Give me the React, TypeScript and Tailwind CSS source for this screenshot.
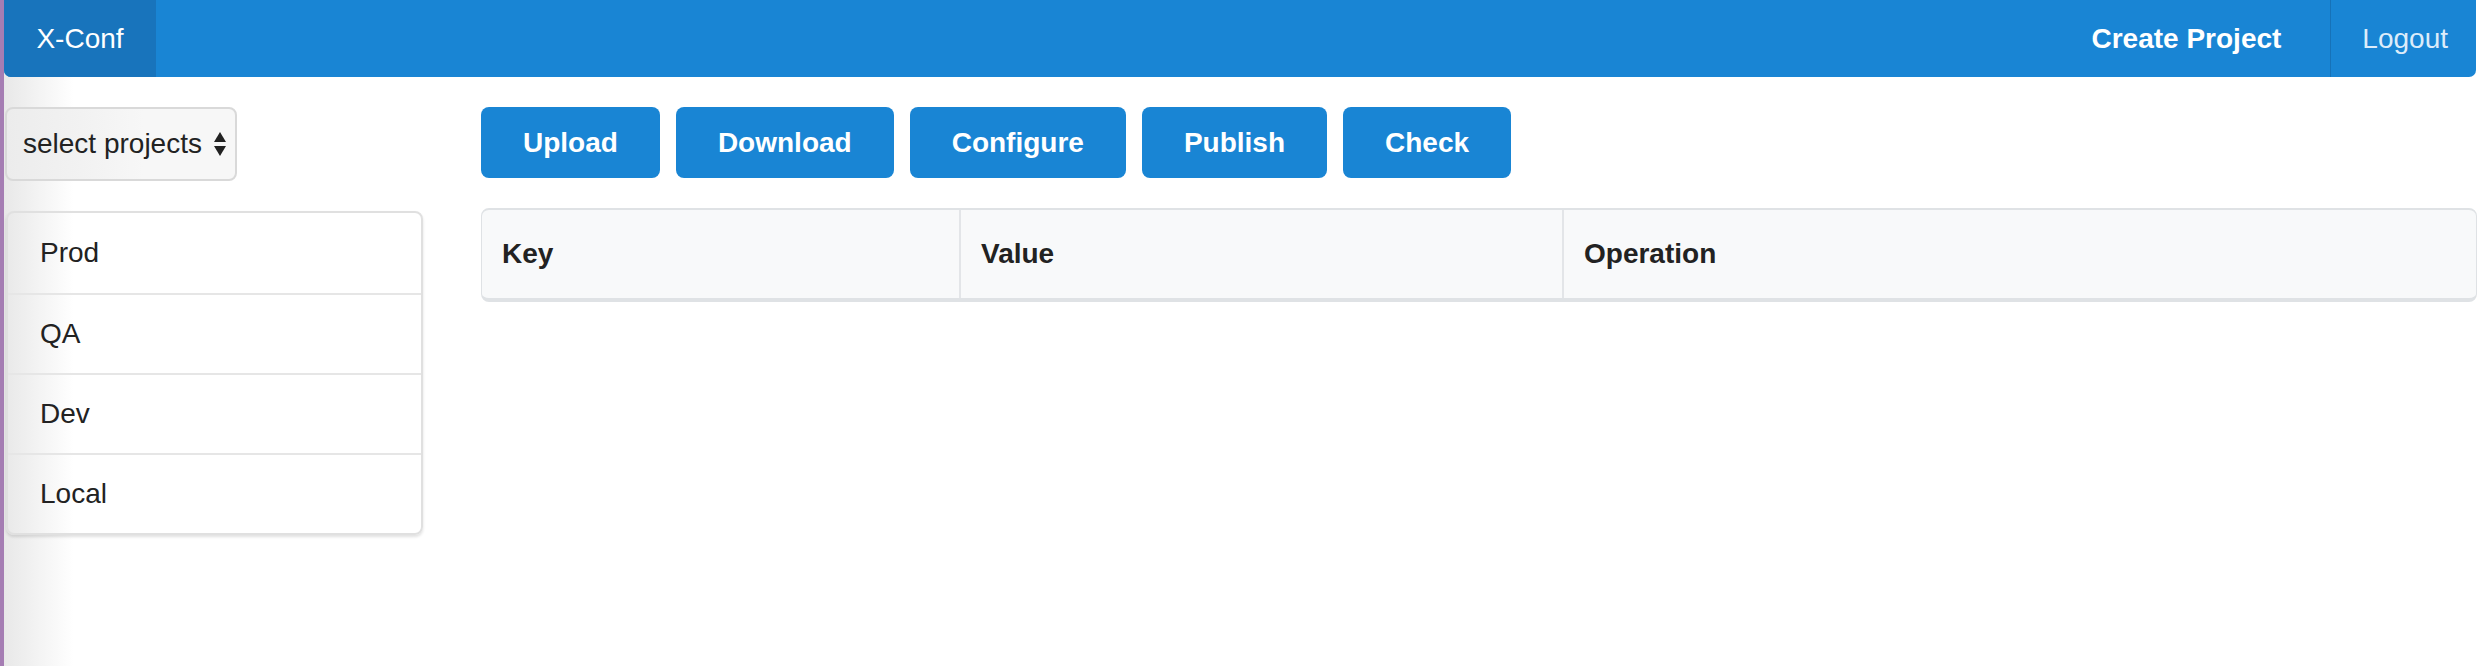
import React from "react";

function SortArrows() {
  return (
    <svg width="14" height="26" viewBox="0 0 14 26" className="shrink-0">
      <polygon points="7,1 13,11 1,11" fill="#222" />
      <polygon points="1,15 13,15 7,25" fill="#222" />
    </svg>
  );
}

export default function App() {
  const buttons = ["Upload", "Download", "Configure", "Publish", "Check"];
  const envs = ["Prod", "QA", "Dev", "Local"];
  return (
    <div className="flex min-h-[666px] bg-white font-['Liberation_Sans',Arial,sans-serif] text-[#212529]">
      <div className="w-[4px] shrink-0 bg-[#a57db3]" />
      <div className="flex-1 bg-[linear-gradient(to_right,#e8e8e8_0px,#ffffff_70px)]">
        <nav className="h-[77px] mr-[4px] flex items-stretch bg-[#1985d4] rounded-b-[7px]">
          <div className="w-[152px] flex items-center justify-center bg-[#1874bc] rounded-bl-[7px] text-white text-[28px]">
            X-Conf
          </div>
          <div className="flex-1" />
          <div className="flex items-center pr-[49px] text-white font-bold text-[28px]">
            Create Project
          </div>
          <div className="flex items-center border-l border-[#1672b8] pl-[31px] pr-[28px] text-[#dcecfa] text-[28px]">
            Logout
          </div>
        </nav>
        <div className="flex pt-[30px]">
          <aside className="w-[419px] ml-[1px] shrink-0">
            <div className="w-[232px] h-[74px] flex items-center justify-between pl-[16px] pr-[8px] rounded-[8px] border-2 border-[#d9d9d9] bg-[linear-gradient(to_right,#ececec,#f7f7f7_60%)] text-[28px] text-[#222]">
              <span>select projects</span>
              <SortArrows />
            </div>
            <div className="mt-[30px] ml-[1px] w-[417px] rounded-[8px] border-2 border-[#e0e0e0] shadow-[0_2px_3px_rgba(0,0,0,0.12)]">
              {envs.map((e, i) => (
                <div
                  key={e}
                  className={`h-[80px] flex items-center pl-[32px] text-[28px] text-[#222] ${i > 0 ? "border-t-2 border-[#e6e6e6]" : ""}`}
                >
                  {e}
                </div>
              ))}
            </div>
          </aside>
          <main className="ml-[57px] mr-[3px] flex-1">
            <div className="flex gap-[16px]">
              {buttons.map((b) => (
                <div
                  key={b}
                  className="h-[71px] flex items-center px-[42px] rounded-[8px] bg-[#1985d4] text-white font-bold text-[28px]"
                >
                  {b}
                </div>
              ))}
            </div>
            <div className="mt-[30px] grid grid-cols-[479px_603px_1fr] h-[94px] rounded-[8px] border-t-2 border-x border-b-4 border-[#dfe2e5] bg-[#f8f9fa] font-bold text-[28px] text-[#222]">
              <div className="flex items-center pl-[20px] border-r-2 border-[#e3e5e8]">Key</div>
              <div className="flex items-center pl-[20px] border-r-2 border-[#e3e5e8]">Value</div>
              <div className="flex items-center pl-[20px]">Operation</div>
            </div>
          </main>
        </div>
      </div>
    </div>
  );
}
